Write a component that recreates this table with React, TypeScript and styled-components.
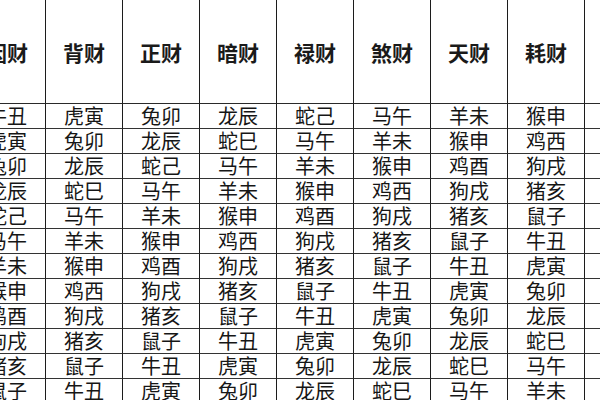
import React from "react";
import styled, { createGlobalStyle } from "styled-components";

const Global = createGlobalStyle`
  html, body {
    margin: 0;
    padding: 0;
    background: #ffffff;
    overflow: hidden;
  }
  body {
    width: 600px;
    height: 400px;
    font-family: "Noto Sans CJK SC", "Noto Sans", sans-serif;
  }
`;

const Viewport = styled.div`
  width: 600px;
  height: 400px;
  overflow: hidden;
  background: #fff;
`;

const Grid = styled.div`
  display: grid;
  grid-template-columns: repeat(9, 77px);
  grid-template-rows: 106px;
  grid-auto-rows: 25px;
  margin-left: -31px;
  margin-top: -2px;
  width: max-content;
`;

const HeaderCell = styled.div`
  box-sizing: border-box;
  display: flex;
  align-items: center;
  justify-content: center;
  border-right: 1px solid #1c1c1c;
  border-bottom: 1px solid #2a2a2a;
  font-size: 21px;
  font-weight: 700;
  color: #1a1a1a;
  white-space: nowrap;
  overflow: visible;
  padding-top: 2px;
`;

const Cell = styled.div`
  box-sizing: border-box;
  display: flex;
  align-items: center;
  justify-content: center;
  border-right: 1px solid #1c1c1c;
  border-bottom: 1px solid #333;
  font-size: 20px;
  font-weight: 400;
  color: #161616;
  line-height: 1;
  white-space: nowrap;
`;

const headers = ["因财", "背财", "正财", "暗财", "禄财", "煞财", "天财", "耗财", ""];

const rows: string[][] = [
  ["牛丑", "虎寅", "兔卯", "龙辰", "蛇己", "马午", "羊未", "猴申", ""],
  ["虎寅", "兔卯", "龙辰", "蛇巳", "马午", "羊未", "猴申", "鸡西", ""],
  ["兔卯", "龙辰", "蛇己", "马午", "羊未", "猴申", "鸡酉", "狗戌", ""],
  ["龙辰", "蛇巳", "马午", "羊未", "猴申", "鸡西", "狗戌", "猪亥", ""],
  ["蛇己", "马午", "羊未", "猴申", "鸡酉", "狗戌", "猪亥", "鼠子", ""],
  ["马午", "羊未", "猴申", "鸡西", "狗戌", "猪亥", "鼠子", "牛丑", ""],
  ["羊未", "猴申", "鸡酉", "狗戌", "猪亥", "鼠子", "牛丑", "虎寅", ""],
  ["猴申", "鸡西", "狗戌", "猪亥", "鼠子", "牛丑", "虎寅", "兔卯", ""],
  ["鸡酉", "狗戌", "猪亥", "鼠子", "牛丑", "虎寅", "兔卯", "龙辰", ""],
  ["狗戌", "猪亥", "鼠子", "牛丑", "虎寅", "兔卯", "龙辰", "蛇巳", ""],
  ["猪亥", "鼠子", "牛丑", "虎寅", "兔卯", "龙辰", "蛇巳", "马午", ""],
  ["鼠子", "牛丑", "虎寅", "兔卯", "龙辰", "蛇巳", "马午", "羊未", ""],
];

export default function App() {
  return (
    <Viewport>
      <Global />
      <Grid>
        {headers.map((h, i) => (
          <HeaderCell key={`h${i}`}>{h}</HeaderCell>
        ))}
        {rows.map((r, ri) =>
          r.map((c, ci) => <Cell key={`${ri}-${ci}`}>{c}</Cell>)
        )}
      </Grid>
    </Viewport>
  );
}
